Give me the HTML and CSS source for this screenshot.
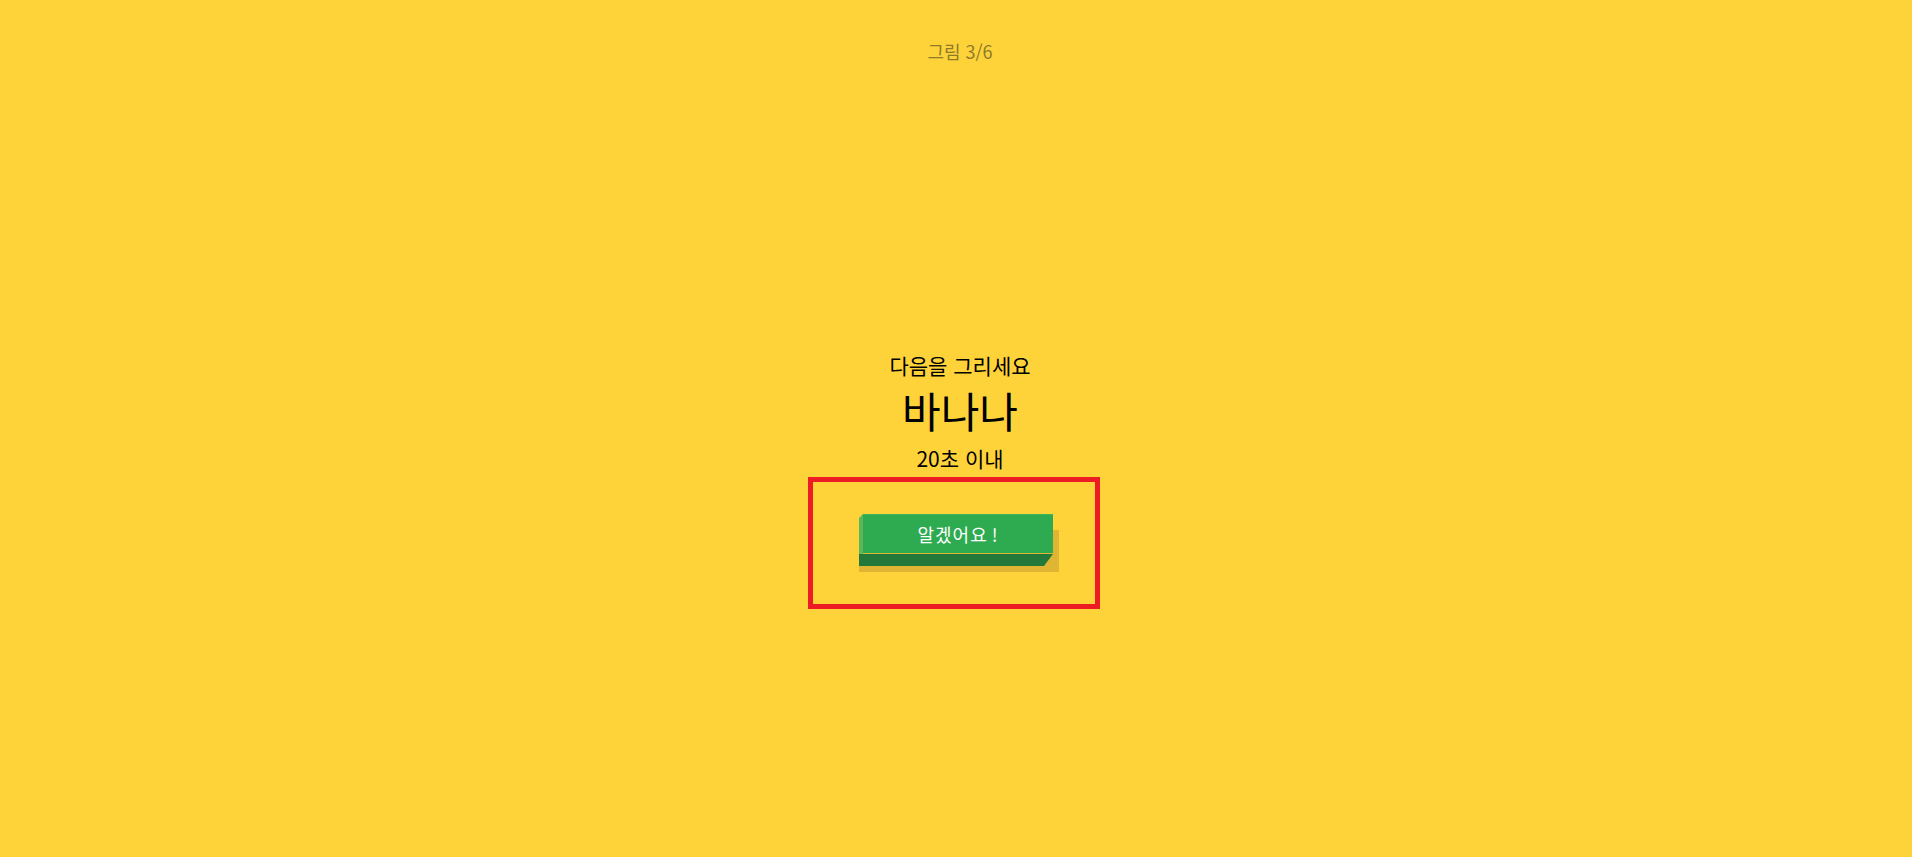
FILE: index.html
```html
<!DOCTYPE html>
<html lang="ko">

<head>
    <meta charset="utf-8">
    <meta name="viewport" content="width=device-width, initial-scale=1.0">
    <title>그림 3/6</title>
    <link rel="stylesheet" href="styles.css">
</head>

<body>
    <div class="page">
        <p class="counter">그림 3/6</p>

        <section class="opgave">
            <p class="prompt">다음을 그리세요</p>
            <h1 class="word">바나나</h1>
            <p class="time">20초 이내</p>

            <div class="markering">
                <div class="knap-wrap">
                    <button class="knap">알겠어요<span class="udraab">!</span></button>
                </div>
            </div>
        </section>
    </div>
</body>

</html>
```

FILE: styles.css
```css
body {
    margin: 0;
    padding: 0;
    background-color: #fed33a;
    font-family: "Noto Sans CJK KR", "Noto Sans", sans-serif;
    color: #000;
}

.page {
    min-height: 857px;
    padding-left: 8px;
    display: flex;
    flex-direction: column;
    align-items: center;
}

.counter {
    margin: 42px 0 0;
    font-size: 18px;
    line-height: 18px;
    color: #8d7b2b;
}

/**************** Opgave **************/

.opgave {
    margin-top: 295px;
    display: flex;
    flex-direction: column;
    align-items: center;
}

.prompt {
    margin: 0;
    font-size: 21px;
    line-height: 20px;
}

.word {
    margin: 14px 0 0;
    font-size: 42px;
    line-height: 42px;
    font-weight: 400;
}

.time {
    margin: 17px 0 0;
    font-size: 21px;
    line-height: 20px;
}

.markering {
    margin: 9px 12px 0 0;
    width: 292px;
    height: 132px;
    box-sizing: border-box;
    border: 5px solid #ed1c24;
    padding: 32px 0 0 46px;
    display: flex;
}

/**************** Knap **************/

.knap-wrap {
    position: relative;
    width: 200px;
    height: 58px;
}

/* skygge */
.knap-wrap::before {
    content: "";
    position: absolute;
    left: 0;
    right: 0;
    top: 16px;
    bottom: 0;
    background-color: #e0b533;
}

.knap {
    position: relative;
    display: block;
    margin-left: 4px;
    width: 190px;
    height: 39px;
    padding: 0;
    border: 0;
    border-top: 1px solid #3cb45a;
    background-color: #2eab50;
    color: #fff;
    font-family: inherit;
    font-size: 18px;
    line-height: 38px;
    letter-spacing: 1px;
    cursor: pointer;
}

.knap .udraab {
    margin-left: 4px;
}

/* venstre side */
.knap::before {
    content: "";
    position: absolute;
    left: -4px;
    top: -1px;
    width: 4px;
    height: 40px;
    background-color: #5ab85b;
    clip-path: polygon(0 4px, 100% 0, 100% 100%, 0 100%);
}

/* bund */
.knap::after {
    content: "";
    position: absolute;
    left: -4px;
    top: 39px;
    width: 194px;
    height: 12px;
    background-color: #23793a;
    clip-path: polygon(0 0, 100% 0, calc(100% - 9px) 100%, 0 100%);
}
```
